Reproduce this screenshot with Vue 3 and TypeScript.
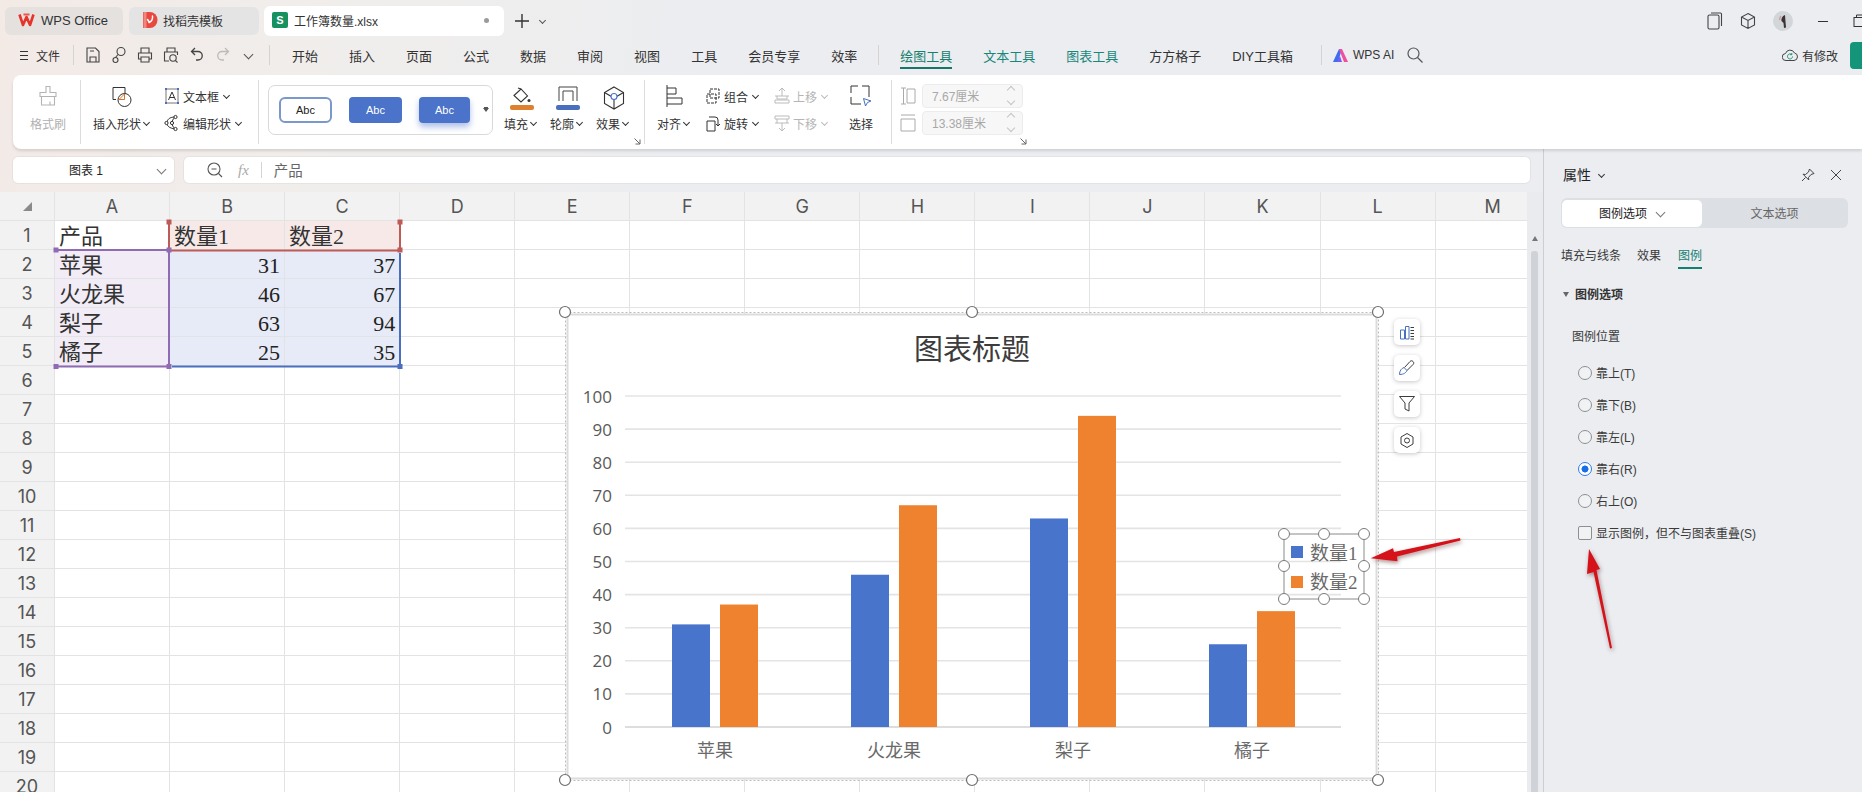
<script setup lang="ts">
const columns = 'ABCDEFGHIJKLM'.split('')
const rowNumbers = Array.from({ length: 20 }, (_, i) => i + 1)

interface Cell { text: string; kind: 'head' | 'label' | 'num' | 'corner' }
const cells: Record<string, Cell> = {
  A1: { text: '产品', kind: 'corner' },
  B1: { text: '数量1', kind: 'head' },
  C1: { text: '数量2', kind: 'head' },
  A2: { text: '苹果', kind: 'label' },
  B2: { text: '31', kind: 'num' },
  C2: { text: '37', kind: 'num' },
  A3: { text: '火龙果', kind: 'label' },
  B3: { text: '46', kind: 'num' },
  C3: { text: '67', kind: 'num' },
  A4: { text: '梨子', kind: 'label' },
  B4: { text: '63', kind: 'num' },
  C4: { text: '94', kind: 'num' },
  A5: { text: '橘子', kind: 'label' },
  B5: { text: '25', kind: 'num' },
  C5: { text: '35', kind: 'num' },
}
const cellAt = (c: string, r: number) => cells[c + r]

const menuA = ['开始', '插入', '页面', '公式', '数据', '审阅', '视图', '工具', '会员专享', '效率']
const positions = [
  { label: '靠上(T)', on: false },
  { label: '靠下(B)', on: false },
  { label: '靠左(L)', on: false },
  { label: '靠右(R)', on: true },
  { label: '右上(O)', on: false },
]

// chart geometry, page coordinates
const plotBottom = 727
const unit = 3.31
const ticks = Array.from({ length: 11 }, (_, i) => ({
  label: String(i * 10),
  y: plotBottom - i * 10 * unit,
}))
const groups = [
  { name: '苹果', a: 31, b: 37, x: 672 },
  { name: '火龙果', a: 46, b: 67, x: 851 },
  { name: '梨子', a: 63, b: 94, x: 1030 },
  { name: '橘子', a: 25, b: 35, x: 1209 },
]
const chartHandles = [
  [565, 312], [972, 312], [1378, 312],
  [565, 780], [972, 780], [1378, 780],
]
const legendHandles = [
  [1284, 534], [1324, 534], [1364, 534],
  [1284, 566], [1364, 566],
  [1284, 599], [1324, 599], [1364, 599],
]
const sideButtons = [332, 368, 404, 440]
const marks = [
  { x: 169, y: 222, c: '#bd5b57' }, { x: 400, y: 222, c: '#bd5b57' },
  { x: 56, y: 250, c: '#8f6bb3' }, { x: 169, y: 250, c: '#8f6bb3' },
  { x: 400, y: 250, c: '#bd5b57' },
  { x: 56, y: 366.5, c: '#8f6bb3' }, { x: 169, y: 366.5, c: '#8f6bb3' },
  { x: 400, y: 366.5, c: '#4a6fbf' },
]
</script>

<template>
  <div class="app">
    <!-- title bar -->
    <header class="titlebar">
      <div class="tab">
        <svg class="tab-logo" width="17" height="14" viewBox="0 0 17 14">
          <path d="M1.5 1.5 5 12l3.5-8 3.5 8 3.5-10.500" fill="none" stroke="#e5352b" stroke-width="2.600" stroke-linejoin="round" />
          <path d="M5.500 1.500h6" stroke="#f0554a" stroke-width="2" />
        </svg>
        <span class="tab-wps">WPS Office</span>
      </div>
      <div class="tab tab-b">
        <svg width="16" height="18" viewBox="0 0 16 18">
          <path d="M1 1h7a7.500 8 0 0 1 0 16H1z" fill="#e8483f" />
          <path d="M3 1v16" stroke="#f0867e" stroke-width="3" />
          <path d="M10.500 5c.5 3-1 6-3.500 6.500M5.500 8.500l2 3" fill="none" stroke="#fff" stroke-width="1.500" stroke-linecap="round" />
        </svg>
        <span>找稻壳模板</span>
      </div>
      <div class="tab tab-active">
        <span class="sheet-badge">S</span>
        <span class="active-name">工作簿数量.xlsx</span>
        <span class="tab-dot"></span>
      </div>
      <svg class="plus" width="14" height="14" viewBox="0 0 14 14">
        <path d="M7 0v14M0 7h14" stroke="#333" stroke-width="1.400" />
      </svg>
      <span class="chev plus-chev"></span>

      <div class="win-controls">
        <svg width="16" height="18" viewBox="0 0 16 18" fill="none" stroke="#444" stroke-width="1.100">
          <rect x="1" y="3" width="11" height="14" rx="1.500" />
          <path d="M4 1h9.500a1 1 0 0 1 1 1v12" />
        </svg>
        <svg width="16" height="18" viewBox="0 0 16 18" fill="none" stroke="#444" stroke-width="1.100">
          <path d="M8 1.500l6.500 3.500v8L8 16.500 1.500 13V5zM1.500 5 8 8.500 14.500 5M8 8.500v8" />
        </svg>
        <svg class="avatar" width="20" height="20" viewBox="0 0 20 20">
          <circle cx="10" cy="10" r="10" fill="#d2d6d8" />
          <path d="M12 4c-3 1-4 4-3.500 6l2 2 .5 5 2-.5-.5-6z" fill="#3c3236" />
          <path d="M8 5c-1 2-2 3-1 4" stroke="#c9a0a0" stroke-width="1.500" fill="none" />
        </svg>
        <span class="win-min"></span>
        <svg width="14" height="14" viewBox="0 0 14 14" fill="none" stroke="#333" stroke-width="1">
          <rect x="1" y="3.500" width="9" height="9" />
          <path d="M3.500 3.500V1h9v9H10" />
        </svg>
      </div>
    </header>

    <!-- menu bar -->
    <nav class="menubar">
      <span class="hamburger"><i></i><i></i><i></i></span>
      <span class="file-label">文件</span>
      <span class="vsep sep-file"></span>
      <div class="quick">
        <svg width="16" height="18" viewBox="0 0 16 18" fill="none" stroke="#444" stroke-width="1.100">
          <path d="M2 2h8.500L14 5.500V16H2zM5 16v-5h6v5M5 5h4" />
        </svg>
        <svg width="16" height="18" viewBox="0 0 16 18" fill="none" stroke="#444" stroke-width="1.100">
          <circle cx="10" cy="5.500" r="4" />
          <circle cx="4.500" cy="14" r="2.500" />
          <path d="M7 8.500 4.500 11.500" />
        </svg>
        <svg width="16" height="18" viewBox="0 0 16 18" fill="none" stroke="#444" stroke-width="1.100">
          <path d="M4 7V2h8v5M4 13H1.500V7h13v6H12M4 11h8v5H4z" />
        </svg>
        <svg width="16" height="18" viewBox="0 0 16 18" fill="none" stroke="#444" stroke-width="1.100">
          <path d="M4 6V2h8v4M6 15H1.500V6h13v3" />
          <circle cx="10" cy="12" r="3.200" />
          <path d="m12.300 14.300 2.200 2.200" />
        </svg>
        <svg width="16" height="18" viewBox="0 0 16 18" fill="none" stroke="#444" stroke-width="1.300">
          <path d="M6 2 2.500 5.500 6 9M3 5.500h6a4 4 0 0 1 0 8.500H7" />
        </svg>
        <svg width="16" height="18" viewBox="0 0 16 18" fill="none" stroke="#bbb" stroke-width="1.300">
          <path d="M10 2l3.500 3.500L10 9M13 5.500H7a4 4 0 0 0 0 8.500h2" />
        </svg>
        <span class="chev chev-big"></span>
      </div>
      <span class="vsep sep-quick"></span>
      <div class="menu-group">
        <span v-for="m in menuA" :key="m">{{ m }}</span>
      </div>
      <span class="vsep sep-menu"></span>
      <div class="menu-group">
        <span class="menu-current">绘图工具</span>
        <span class="menu-teal">文本工具</span>
        <span class="menu-teal">图表工具</span>
        <span>方方格子</span>
        <span>DIY工具箱</span>
      </div>
      <span class="vsep sep-diy"></span>
      <svg class="ai-logo" width="15" height="13" viewBox="0 0 15 13">
        <path d="M0 13 6 0h3L5 13z" fill="#3d6ef0" />
        <path d="M6 0h3l6 13h-4z" fill="#f04fa0" />
        <path d="M4 13l3-6 2 6z" fill="#7a5cf0" />
      </svg>
      <span class="ai-text">WPS AI</span>
      <svg class="menu-search" width="16" height="16" viewBox="0 0 16 16" fill="none" stroke="#555" stroke-width="1.200">
        <circle cx="6.500" cy="6.500" r="5.500" />
        <path d="m10.500 10.500 5 5" />
      </svg>
      <div class="save-state">
        <svg width="16" height="16" viewBox="0 0 16 16" fill="none" stroke="#444" stroke-width="1">
          <path d="M4 13.500a3.500 3.500 0 0 1-.5-7A4.800 4.800 0 0 1 12.500 6a3.800 3.800 0 0 1-.5 7.500z" />
          <path d="M10.500 9.500a2.500 2.500 0 1 1-.9-2M9.800 6v1.700H8.200" stroke="#1a9070" />
        </svg>
        <span>有修改</span>
        <span class="share-btn"></span>
      </div>
    </nav>

    <!-- ribbon -->
    <section class="ribbon">
      <div class="r-group g-format">
        <svg class="muted-icon" width="22" height="22" viewBox="0 0 22 22" fill="none" stroke="#b4b4b4" stroke-width="1.100">
          <path d="M9 1.500h4v6h6v4H3v-4h6zM4.500 11.500V20h13v-8.500M13 16.500V20" />
        </svg>
        <span class="muted">格式刷</span>
      </div>
      <span class="r-sep"></span>
      <div class="r-group g-shapes">
        <div class="cell-center icon-col">
          <svg width="22" height="24" viewBox="0 0 22 24" fill="none" stroke="#333" stroke-width="1">
            <path d="M5 14.500H2v-12h12v6.500" />
            <circle cx="13.500" cy="15" r="6.500" />
            <path d="M8 14.500 13.500 9v5.500z" stroke="#d9742c" />
          </svg>
        </div>
        <div class="cell-row">
          <svg width="16" height="18" viewBox="0 0 16 18" fill="none">
            <path d="M2 2h12v14H2z" stroke="#666" stroke-width=".900" />
            <path d="M4.500 13 8 5l3.500 8M6 10.500h4" stroke="#333" stroke-width="1" />
            <path d="M1 1h2v2H1zM13 1h2v2h-2zM1 15h2v2H1zM13 15h2v2h-2z" fill="#4a6fbf" />
          </svg>
          <span>文本框</span>
          <span class="chev chev-gap"></span>
        </div>
        <div class="cell-center cell-label pull-more"><span>插入形状</span><span class="chev"></span></div>
        <div class="cell-row">
          <svg width="16" height="18" viewBox="0 0 16 18" fill="none" stroke="#333" stroke-width="1">
            <path d="M11 3C5 3 3 6 3 9s2 5 8 6M11 3c-2 2-3 4-3 6s1 4 3 6" />
            <circle cx="11.500" cy="3" r="1.600" fill="#fff" />
            <circle cx="2.500" cy="9" r="1.600" fill="#fff" />
            <circle cx="8" cy="9" r="1.600" fill="#fff" />
            <circle cx="11.500" cy="15" r="1.600" fill="#fff" />
          </svg>
          <span>编辑形状</span>
          <span class="chev chev-gap"></span>
        </div>
      </div>
      <span class="r-sep"></span>
      <div class="gallery">
        <span class="abc abc-outline">Abc</span>
        <span class="abc abc-fill">Abc</span>
        <span class="abc abc-glow">Abc</span>
        <span class="gallery-more"></span>
      </div>
      <div class="r-group g-paint">
        <div class="paint-icon">
          <svg width="26" height="26" viewBox="0 0 26 26">
            <path d="M5 10.500 12 4l6.500 7L12 17z" fill="none" stroke="#333" stroke-width="1.100" />
            <path d="M9 3l3 1" stroke="#333" stroke-width="1.100" />
            <circle cx="20" cy="15.500" r="1.500" fill="#333" />
            <rect x="1" y="20" width="24" height="5" rx="2" fill="#dd8131" />
          </svg>
        </div>
        <div class="paint-icon">
          <svg width="26" height="26" viewBox="0 0 26 26">
            <path d="M4 16V2h18v14M8 16V6h10v10" fill="none" stroke="#444" stroke-width="1" />
            <rect x="1" y="20" width="24" height="5" rx="2" fill="#4a6fbf" />
          </svg>
        </div>
        <div class="paint-icon">
          <svg width="24" height="26" viewBox="0 0 24 26" fill="none" stroke="#333" stroke-width="1.100">
            <path d="M12 2l9.500 5.500v11L12 24l-9.500-5.500v-11zM2.500 7.500 12 13l9.500-5.500M12 13v11" />
            <circle cx="12" cy="11.500" r="3" stroke="#4a74c9" fill="#fff" />
          </svg>
        </div>
        <div class="cell-center cell-label pull"><span>填充</span><span class="chev"></span></div>
        <div class="cell-center cell-label pull"><span>轮廓</span><span class="chev"></span></div>
        <div class="cell-center cell-label pull"><span>效果</span><span class="chev"></span></div>
      </div>
      <svg class="launcher" width="7" height="7" viewBox="0 0 7 7" fill="none" stroke="#666" stroke-width="1">
        <path d="M.5.5l5.500 5.500M6 1.500V6H1.500" />
      </svg>
      <span class="r-sep"></span>
      <div class="r-group g-arrange">
        <div class="cell-center">
          <svg width="20" height="24" viewBox="0 0 20 24" fill="none" stroke="#333" stroke-width="1">
            <path d="M2 1v22" />
            <path d="M2 4h9v6H2M2 14h15v6H2" />
          </svg>
        </div>
        <div class="cell-row">
          <svg width="16" height="18" viewBox="0 0 16 18" fill="none" stroke="#333" stroke-width="1">
            <path d="M5 2h9v9H5zM2 7h9v9H2z" stroke-dasharray="3 1" />
          </svg>
          <span>组合</span>
          <span class="chev chev-gap"></span>
        </div>
        <div class="cell-row faded">
          <svg width="16" height="18" viewBox="0 0 16 18" fill="none" stroke="#bbb" stroke-width="1">
            <path d="M8 9V1M5 4l3-3 3 3M1 9h14M3 9v3h10V9M1 13h14v3H1z" />
          </svg>
          <span>上移</span>
          <span class="chev chev-faded chev-gap"></span>
        </div>
        <div class="cell-center">
          <svg width="24" height="24" viewBox="0 0 24 24" fill="none" stroke="#333" stroke-width="1">
            <path d="M2 9V2h7M13 2h7v11M2 13v7h10" />
            <path d="M14.500 14.500 22 17l-3.500 1.500-2 3.500z" stroke="#4a6fbf" fill="#fff" />
          </svg>
        </div>
        <div class="cell-center cell-label pull"><span>对齐</span><span class="chev"></span></div>
        <div class="cell-row">
          <svg width="16" height="18" viewBox="0 0 16 18" fill="none" stroke="#333" stroke-width="1">
            <path d="M2 7h8v10H2zM4 3h6a3 3 0 0 1 3 3v6M11 10l2 2 2-2" />
          </svg>
          <span>旋转</span>
          <span class="chev chev-gap"></span>
        </div>
        <div class="cell-row faded">
          <svg width="16" height="18" viewBox="0 0 16 18" fill="none" stroke="#bbb" stroke-width="1">
            <path d="M1 2h14v3H1zM1 9h14M3 5v4M13 5v4M8 9v8M5 14l3 3 3-3" />
          </svg>
          <span>下移</span>
          <span class="chev chev-faded chev-gap"></span>
        </div>
        <div class="cell-center cell-label"><span>选择</span></div>
      </div>
      <span class="r-sep"></span>
      <div class="r-group g-size">
        <svg width="16" height="18" viewBox="0 0 16 18" fill="none" stroke="#aaa" stroke-width="1">
          <path d="M1 1h5M1 17h5M3.500 1v16M7 2h8v14H7z" />
        </svg>
        <div class="stepper"><span>7.67厘米</span><i class="spin"><b></b><b></b></i></div>
        <svg width="16" height="18" viewBox="0 0 16 18" fill="none" stroke="#aaa" stroke-width="1">
          <path d="M1 1h14M1 5h14v12H1z" />
        </svg>
        <div class="stepper"><span>13.38厘米</span><i class="spin"><b></b><b></b></i></div>
      </div>
      <svg class="launcher" width="7" height="7" viewBox="0 0 7 7" fill="none" stroke="#666" stroke-width="1">
        <path d="M.5.5l5.500 5.500M6 1.500V6H1.500" />
      </svg>
    </section>

    <!-- work area -->
    <div class="work">
      <div class="left">
        <div class="formula-row">
          <div class="name-box">
            <span class="lift">图表 1</span>
            <span class="chev chev-wide"></span>
          </div>
          <div class="formula-box">
            <svg width="16" height="16" viewBox="0 0 16 16" fill="none" stroke="#555" stroke-width="1.100">
              <circle cx="7" cy="7" r="6" />
              <path d="M4.500 7h5M11.500 11.500l3.500 3.500" />
            </svg>
            <span class="fx">fx</span>
            <span class="vsep fx-sep"></span>
            <span class="formula-text lift">产品</span>
          </div>
        </div>

        <div class="sheet-wrap">
          <div class="sheet">
            <div class="grid">
              <div class="corner"><span class="corner-tri"></span></div>
              <div v-for="c in columns" :key="c" class="col-head">{{ c }}</div>
              <template v-for="r in rowNumbers" :key="r">
                <div class="row-head">{{ r }}</div>
                <div
                  v-for="c in columns"
                  :key="c + r"
                  class="cell"
                  :class="cellAt(c, r)?.kind ? 'k-' + cellAt(c, r)?.kind : ''"
                >{{ cellAt(c, r)?.text }}</div>
              </template>
            </div>

            <!-- selection ranges, above the cells -->
            <svg class="overlay" viewBox="0 192 1527 600">
              <path d="M169 222v28.500M400 222v28.500M170 250.500h230" stroke="#bd5b57" stroke-width="2" fill="none" />
              <path d="M56 250h113M56 366.500h113M169 250v116.500" stroke="#8f6bb3" stroke-width="2" fill="none" />
              <path d="M400 253v113.500M172 366.500h228" stroke="#4a6fbf" stroke-width="2" fill="none" />
              <rect v-for="(m, i) in marks" :key="i" :x="m.x - 2.500" :y="m.y - 2.500" width="5" height="5" :fill="m.c" />

              <!-- chart object -->
              <rect x="565.500" y="312.500" width="813" height="468" fill="none" stroke="#bcbcbc" stroke-dasharray="2 2" />
              <rect x="567.500" y="314.500" width="809" height="464" fill="#fff" stroke="#dcdcdc" stroke-width="2" />
              <text x="972" y="347" class="c-title" text-anchor="middle" dominant-baseline="central">图表标题</text>
              <g v-for="t in ticks" :key="t.label">
                <line x1="625" x2="1341" :y1="t.y" :y2="t.y" :stroke="t.label === '0' ? '#d2d2d2' : '#e4e4e4'" stroke-width="1.600" />
                <text x="612" :y="t.y" class="c-axis" text-anchor="end" dominant-baseline="central">{{ t.label }}</text>
              </g>
              <g v-for="g in groups" :key="g.name">
                <rect :x="g.x" :y="plotBottom - g.a * unit" width="38" :height="g.a * unit" fill="#4874cb" />
                <rect :x="g.x + 48" :y="plotBottom - g.b * unit" width="38" :height="g.b * unit" fill="#ee822f" />
                <text :x="g.x + 43" y="751" class="c-cat" text-anchor="middle" dominant-baseline="central">{{ g.name }}</text>
              </g>

              <!-- legend -->
              <rect x="1284" y="534" width="80" height="65" fill="none" stroke="#8a8a8a" />
              <rect x="1291" y="546" width="12" height="12" fill="#4874cb" />
              <text x="1310" y="553" class="c-leg" dominant-baseline="central">数量1</text>
              <rect x="1291" y="576" width="12" height="12" fill="#ee822f" />
              <text x="1310" y="582" class="c-leg" dominant-baseline="central">数量2</text>
              <circle v-for="(h, i) in legendHandles" :key="'l' + i" :cx="h[0]" :cy="h[1]" r="5.500" fill="#fff" stroke="#7a7a7a" />
              <circle v-for="(h, i) in chartHandles" :key="'c' + i" :cx="h[0]" :cy="h[1]" r="5.500" fill="#fff" stroke="#6e6e6e" stroke-width="1.200" />

              <!-- floating chart tools -->
              <rect v-for="y in sideButtons" :key="y" x="1394" :y="y - 13" width="26" height="26" rx="5" fill="#fff" class="tool-shadow" />
              <g fill="none" stroke="#3c3c3c" stroke-width="1">
                <path d="M1400.500 330h4v9h-4zM1405.500 326.500h3.500v12.500h-3.500z" stroke="#4a6fbf" />
                <path d="M1410.500 327.500h3.500M1410.500 330.500h3.500M1410.500 333.500h3.500M1410.500 336.500h3.500M1410.500 339h3.500" />
                <path d="M1399.500 374.500c0-4 2-6 4.500-7l3 3c-1 2-3 4-7.500 4z" stroke="#4a6fbf" />
                <path d="M1404.500 367.500l5.500-6c1-1 2-1 3 0s1 2 0 3l-6 6" />
                <path d="M1399.500 396.500h15l-5.500 6.500v8l-4-2v-6z" />
                <path d="M1407 433.500l6 3.500v7l-6 3.500-6-3.500v-7z" />
                <circle cx="1407" cy="440.500" r="2.500" />
              </g>
            </svg>
          </div>
          <div class="vscroll">
            <span class="scroll-arrow"></span>
            <span class="scroll-thumb"></span>
          </div>
        </div>
      </div>

      <!-- properties panel -->
      <aside class="panel">
        <div class="panel-head">
          <span class="panel-title lift">属性</span>
          <span class="chev"></span>
          <svg class="pin" width="14" height="14" viewBox="0 0 14 14" fill="none" stroke="#444" stroke-width="1">
            <path d="M8.500 1 13 5.500l-3 1-2.500 3 .3 2.500L2 6.200l2.500.3 3-2.500zM4.500 9.500 1 13" />
          </svg>
          <svg class="close" width="12" height="12" viewBox="0 0 12 12" stroke="#444" stroke-width="1">
            <path d="M1 1l10 10M11 1 1 11" />
          </svg>
        </div>
        <div class="segment">
          <span class="seg-on"><span class="lift">图例选项</span><span class="chev chev-wide seg-chev"></span></span>
          <span class="seg-off">文本选项</span>
        </div>
        <div class="subtabs">
          <span class="lift">填充与线条</span>
          <span class="lift">效果</span>
          <span class="sub-on">图例</span>
        </div>
        <div class="section"><span class="tri"></span><span class="lift">图例选项</span></div>
        <div class="field-title">图例位置</div>
        <ul class="options">
          <li v-for="p in positions" :key="p.label">
            <span class="radio" :class="{ on: p.on }"></span>
            <span class="lift">{{ p.label }}</span>
          </li>
          <li>
            <span class="check"></span>
            <span class="lift">显示图例，但不与图表重叠(S)</span>
          </li>
        </ul>
      </aside>
    </div>

    <!-- hand-drawn annotation arrows over the screenshot -->
    <svg class="annot" viewBox="0 0 1862 792">
      <path class="red" d="M1370.700 558.300 1393 548.300l1 3.700 66-14 .5 2.500-63.500 16 .5 4.700z" />
      <path class="red" d="M1589 549l11 20-3.500 1 15.500 78-2 .5-16.500-76.500-6.500 2z" />
    </svg>
  </div>
</template>

<style>
html, body { margin: 0; padding: 0; background: #ebedf1; }
</style>

<style scoped>
.app {
  position: relative;
  width: 1862px;
  height: 792px;
  overflow: hidden;
  display: flex;
  flex-direction: column;
  background: linear-gradient(100deg, #f3eae6 0%, #f0eeec 18%, #ebedf1 38%);
  font-family: "Liberation Sans", "Noto Sans CJK SC", sans-serif;
  font-size: 12px;
  color: #333;
}

/* shared little bits */
.lift { padding-bottom: 2px; }
.chev {
  display: inline-block;
  width: 4px;
  height: 4px;
  border-right: 1.300px solid #333;
  border-bottom: 1.300px solid #333;
  transform: translateY(-1px) rotate(45deg);
  flex: none;
}
.chev-wide { width: 6px; height: 6px; border-color: #777; border-width: 1px; }
.chev-big { width: 6px; height: 6px; border-color: #555; margin-left: 4px; }
.chev-faded { border-color: #bbb; }
.chev-gap { margin-left: 2px; }
.vsep { display: block; width: 1px; height: 20px; background: #d3d3d3; flex: none; }

/* title bar */
.titlebar {
  height: 42px;
  flex: none;
  display: flex;
  align-items: center;
  padding-left: 5px;
}
.tab {
  width: 118px;
  height: 28px;
  box-sizing: border-box;
  margin-right: 6px;
  padding: 0 0 2px 13px;
  display: flex;
  align-items: center;
  gap: 6px;
  background: #e4e1df;
  border-radius: 6px;
  color: #333;
}
.tab-wps { font-size: 13px; }
.tab-b { width: 130px; margin-right: 5px; padding-left: 13px; gap: 5px; background: #e5e4e4; }
.tab-active {
  width: 240px;
  height: 30px;
  margin-right: 11px;
  padding-left: 8px;
  background: #fff;
}
.sheet-badge {
  width: 16px;
  height: 16px;
  border-radius: 2px;
  background: #16915f;
  color: #fff;
  font-size: 11px;
  font-weight: 700;
  text-align: center;
  line-height: 16px;
}
.tab-dot {
  width: 5px;
  height: 5px;
  border-radius: 50%;
  background: #9a9a9a;
  margin-left: 100px;
}
.plus-chev { margin-left: 11px; border-color: #555; }
.win-controls {
  margin-left: auto;
  margin-right: -5px;
  display: flex;
  align-items: center;
}
.win-controls svg:nth-child(2) { margin-left: 17px; }
.avatar { margin-left: 17px; }
.win-min { width: 10px; height: 1px; background: #333; margin: 0 25px; }

/* menu bar */
.menubar {
  height: 33px;
  flex: none;
  box-sizing: border-box;
  padding: 0 0 7px 20px;
  display: flex;
  align-items: center;
  font-size: 13px;
  color: #333;
  white-space: nowrap;
}
.hamburger { width: 8px; display: flex; flex-direction: column; gap: 3px; }
.hamburger i { display: block; height: 1px; background: #333; }
.file-label { margin-left: 8px; font-size: 12px; }
.sep-file { margin: 0 11px 0 13px; }
.quick { display: flex; align-items: center; gap: 10px; width: 172px; }
.sep-quick { margin: 0 22px 0 12px; }
.menu-group { display: flex; gap: 31px; }
.sep-menu { margin: 0 21px; }
.menu-current {
  color: #14806e;
  position: relative;
}
.menu-current::after {
  content: "";
  position: absolute;
  left: 0;
  right: 0;
  bottom: -4px;
  height: 2px;
  background: #17766a;
}
.menu-teal { color: #17877a; }
.sep-diy { margin: 0 11px 0 28px; }
.ai-text { margin-left: 5px; font-size: 12px; }
.menu-search { margin-left: 13px; }
.save-state {
  margin-left: auto;
  display: flex;
  align-items: center;
  gap: 4px;
  font-size: 12px;
}
.share-btn {
  width: 12px;
  height: 27px;
  margin-left: 8px;
  border-radius: 4px 0 0 4px;
  background: #149478;
}

/* ribbon */
.ribbon {
  height: 74px;
  flex: none;
  margin-left: 13px;
  display: flex;
  background: #fff;
  border-radius: 8px 0 0 8px;
  box-shadow: 0 2px 3px rgba(0, 0, 0, .12);
  z-index: 1;
  white-space: nowrap;
}
.r-group {
  display: grid;
  grid-template-rows: 26px 26px;
  row-gap: 1px;
  padding-top: 8px;
  box-sizing: border-box;
  flex: none;
}
.r-sep { width: 1px; height: 64px; margin-top: 5px; background: #dcdcdc; flex: none; }
.cell-center { display: flex; align-items: center; justify-content: center; gap: 3px; }
.cell-row { display: flex; align-items: center; gap: 3px; }
.pull { margin-left: -4px; }
.pull-more { margin-left: -8px; }
.faded { color: #b5b5b5; }
.muted { color: #b0b0b0; }
.g-format { width: 67px; padding-left: 3px; justify-items: center; align-items: center; }
.g-shapes {
  width: 177px;
  padding-left: 5px;
  grid-template-columns: 78px 1fr;
}
.icon-col { padding: 2px 6px 0 0; }

.gallery {
  width: 225px;
  height: 50px;
  flex: none;
  box-sizing: border-box;
  margin: 10px 6px 0 9px;
  padding-left: 10px;
  border: 1px solid #d9d9d9;
  border-radius: 7px;
  display: flex;
  align-items: center;
}
.abc {
  width: 53px;
  height: 26px;
  box-sizing: border-box;
  border-radius: 4px;
  font-size: 11px;
  line-height: 26px;
  text-align: center;
  flex: none;
}
.abc-outline { border: 2px solid #7a98c9; line-height: 22px; color: #222; border-radius: 6px; }
.abc-fill { background: #4a73c9; color: #fff; margin-left: 17px; }
.abc-glow {
  background: #4a73c9;
  color: #fff;
  margin-left: 17px;
  width: 51px;
  box-shadow: 0 4px 6px rgba(74, 115, 201, .45);
}
.gallery-more {
  margin-left: 13px;
  width: 0;
  height: 0;
  border: 3px solid transparent;
  border-top: 4px solid #555;
  border-bottom: 0;
  box-shadow: 0 -2px 0 -1px #555;
}

.g-paint { grid-template-columns: repeat(3, 46px); }
.paint-icon { display: flex; align-items: center; justify-content: center; padding-top: 3px; }
.launcher {
  margin: 63px 3px 0 -3px;
  flex: none;
}

.g-arrange { grid-template-columns: 60px 69px 60px 54px; width: 246px; }

.g-size {
  padding: 9px 0 0 8px;
  grid-template-columns: 16px 101px;
  column-gap: 6px;
  row-gap: 3px;
  grid-template-rows: 24px 24px;
  align-items: center;
}
.stepper {
  height: 24px;
  box-sizing: border-box;
  padding: 0 0 2px 9px;
  border: 1px solid #ececec;
  border-radius: 4px;
  background: #f7f7f7;
  color: #a8a8a8;
  display: flex;
  align-items: center;
  justify-content: space-between;
}
.spin { display: flex; flex-direction: column; gap: 5px; padding-right: 8px; }
.spin b {
  display: block;
  width: 5px;
  height: 5px;
  border-left: 1px solid #c4c4c4;
  border-top: 1px solid #c4c4c4;
  transform: rotate(45deg);
}
.spin b + b { transform: rotate(225deg); }

/* work area */
.work { flex: 1; display: flex; min-height: 0; }
.left { width: 1543px; flex: none; display: flex; flex-direction: column; }
.formula-row {
  height: 43px;
  flex: none;
  box-sizing: border-box;
  padding: 8px 13px 9px 13px;
  display: flex;
  gap: 10px;
}
.name-box {
  width: 161px;
  flex: none;
  background: #fff;
  border-radius: 5px;
  box-shadow: 0 0 0 1px rgba(0, 0, 0, .04);
  box-sizing: border-box;
  padding: 0 9px 0 56px;
  display: flex;
  align-items: center;
  justify-content: space-between;
  color: #222;
}
.formula-box {
  flex: 1;
  background: #fff;
  border-radius: 5px;
  box-shadow: 0 0 0 1px rgba(0, 0, 0, .04);
  padding-left: 23px;
  display: flex;
  align-items: center;
}
.fx {
  margin-left: 15px;
  font: italic 15px "Liberation Serif", serif;
  color: #aaa;
}
.fx-sep { margin: 0 12px 0 12px; height: 16px; }
.formula-text { font-size: 14.500px; color: #666; }

.sheet-wrap { flex: 1; display: flex; min-height: 0; }
.sheet { position: relative; width: 1527px; height: 600px; overflow: hidden; background: #fff; }
.grid {
  display: grid;
  grid-template-columns: 55px repeat(13, 115.050px);
  grid-template-rows: 29px repeat(20, 29px);
}
.corner, .col-head, .row-head {
  background: #f2f2f2;
  box-sizing: border-box;
  border-right: 1px solid #e3e3e3;
  border-bottom: 1px solid #e3e3e3;
  font-family: Inter, "Liberation Sans", sans-serif;
  color: #555;
  display: flex;
  align-items: center;
  justify-content: center;
}
.col-head { padding-top: 1px; }
.corner-tri {
  width: 0;
  height: 0;
  border-style: solid;
  border-width: 0 0 9px 9px;
  border-color: transparent transparent #8a8a8a transparent;
}
.col-head, .row-head { font-size: 18px; }
.cell {
  box-sizing: border-box;
  border-right: 1px solid #e2e3e5;
  border-bottom: 1px solid #e2e3e5;
  padding: 3px 4px 0;
  font: 22px/25px "Liberation Serif", "Noto Sans CJK SC", serif;
  color: #333;
  white-space: nowrap;
  overflow: hidden;
}
.k-head { background: #f7e9e7; }
.k-label { background: #f2ecf6; }
.k-num { background: #e7ebf7; text-align: right; padding-right: 4px; color: #222; }
.overlay { position: absolute; left: 0; top: 0; width: 1527px; height: 600px; }
.c-title { font: 400 29px "Noto Sans CJK SC", sans-serif; fill: #3c3c3c; }
.c-axis { font: 17px "Open Sans", sans-serif; fill: #595959; }
.c-cat { font: 18px "Liberation Serif", "Noto Sans CJK SC", serif; fill: #6a6a6a; }
.c-leg { font: 19px "Liberation Serif", "Noto Sans CJK SC", serif; fill: #6a6a6a; }
.tool-shadow { filter: drop-shadow(0 1px 2px rgba(0, 0, 0, .22)); }

.vscroll {
  width: 16px;
  flex: none;
  background: #e9ebef;
  display: flex;
  flex-direction: column;
  align-items: center;
  padding-top: 44px;
  box-sizing: border-box;
  overflow: hidden;
}
.scroll-arrow {
  width: 0;
  height: 0;
  border: 3.500px solid transparent;
  border-bottom: 5px solid #777;
  border-top: 0;
  margin-right: 1px;
}
.scroll-thumb {
  width: 7px;
  flex: 1;
  margin: 10px 2px -6px 0;
  background: #cfd2d6;
  border-radius: 3px 3px 0 0;
}

/* panel */
.panel {
  flex: 1;
  background: #ebedf1;
  border-left: 1px solid #cbced3;
  box-sizing: border-box;
  padding: 13px 14px 0 17px;
  display: flex;
  flex-direction: column;
  font-size: 12px;
  color: #3a3a3a;
  white-space: nowrap;
}
.panel-head { height: 26px; padding-left: 2px; display: flex; align-items: center; }
.panel-title { font-size: 14px; margin-right: 8px; color: #222; }
.pin { margin-left: auto; margin-right: 15px; }
.close { margin-right: 6px; }
.segment {
  height: 30px;
  margin-top: 10px;
  width: 287px;
  background: #dcdfe3;
  border-radius: 6px;
  display: flex;
  align-items: center;
  padding: 0 1px;
  box-sizing: border-box;
}
.seg-on {
  width: 140px;
  height: 27px;
  background: #fff;
  border-radius: 5px;
  display: flex;
  align-items: center;
  padding-left: 37px;
  box-sizing: border-box;
  color: #222;
}
.seg-chev { margin-left: 10px; }
.seg-off { flex: 1; text-align: center; color: #666; padding-bottom: 2px; }
.subtabs {
  margin-top: 15px;
  height: 25px;
  display: flex;
  gap: 16px;
  align-items: center;
}
.sub-on { position: relative; color: #14806e; margin-left: 1px; padding-bottom: 2px; }
.sub-on::after {
  content: "";
  position: absolute;
  left: 0;
  right: 0;
  bottom: -4px;
  height: 2px;
  background: #14806e;
}
.section {
  margin-top: 16px;
  height: 20px;
  display: flex;
  align-items: center;
  gap: 6px;
  padding-left: 2px;
  font-weight: 700;
  color: #333;
}
.tri { width: 0; height: 0; border: 3px solid transparent; border-top: 5px solid #666; border-bottom: 0; }
.field-title { margin-top: 24px; height: 20px; line-height: 19px; padding-left: 11px; }
.options { list-style: none; margin: 9px 0 0; padding: 0 0 0 17px; }
.options li { height: 32px; display: flex; align-items: center; gap: 4px; }
.radio {
  width: 14px;
  height: 14px;
  box-sizing: border-box;
  border: 1px solid #8f8f8f;
  border-radius: 50%;
  background: #f1f2f4;
  flex: none;
}
.radio.on {
  border: 1.500px solid #2f7bea;
  background: radial-gradient(circle, #1a6fe8 0 3.200px, #fff 3.800px);
}
.check {
  width: 14px;
  height: 14px;
  box-sizing: border-box;
  border: 1px solid #8f8f8f;
  border-radius: 2px;
  background: #f1f2f4;
  flex: none;
}

/* annotation */
.annot { position: absolute; left: 0; top: 0; width: 1862px; height: 792px; pointer-events: none; z-index: 3; }
.red { fill: #d5121a; filter: drop-shadow(1px 2px 2px rgba(90, 30, 30, .5)); }
</style>
